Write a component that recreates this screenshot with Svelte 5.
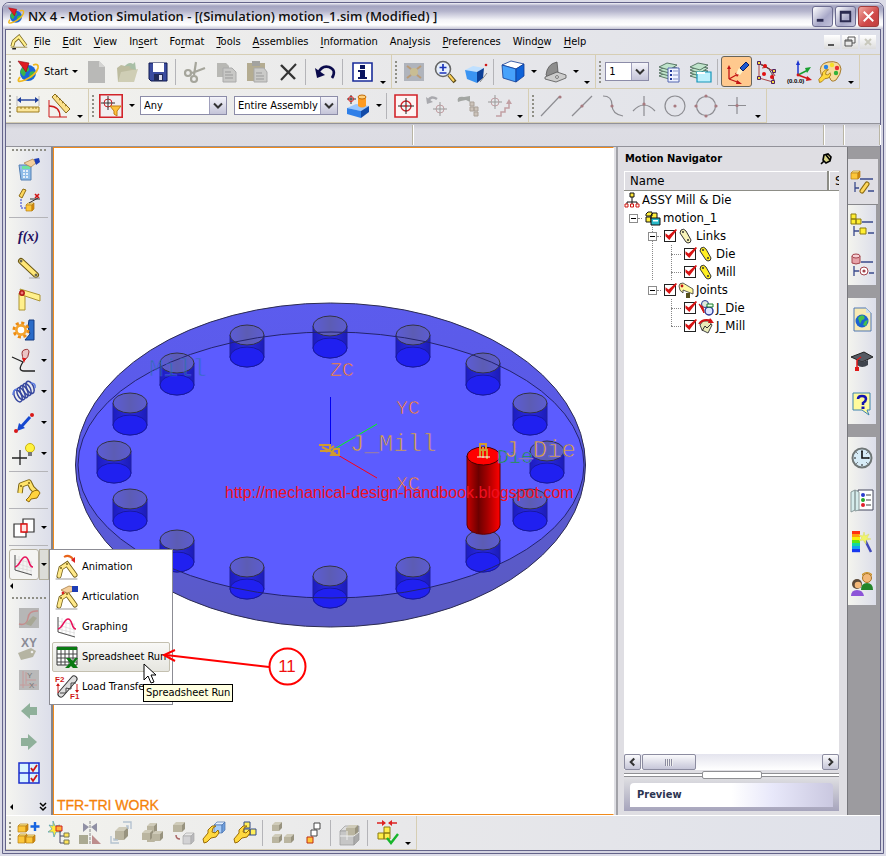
<script lang="ts">
	type Tool = {
		id?: string;
		label?: string;
		sep?: boolean;
		arrow?: boolean;
		active?: boolean;
		disabled?: boolean;
	};

	const sep: Tool = { sep: true };

	// small shaded box used by many icons
	function box(x: number, y: number, w: number, h: number, d: number, top: string, front: string, side: string, line = 'none') {
		return `<g stroke="${line}" stroke-width=".7" stroke-linejoin="round">
			<path fill="${top}" d="M${x} ${y + d}l${d} ${-d}h${w}l${-d} ${d}z"/>
			<path fill="${front}" d="M${x} ${y + d}h${w}v${h}h${-w}z"/>
			<path fill="${side}" d="M${x + w} ${y + d}l${d} ${-d}v${h}l${-d} ${d}z"/></g>`;
	}
	const yellowBox = (x: number, y: number, w: number, h: number, d = 2) => box(x, y, w, h, d, '#fff3a0', '#fcc63a', '#d8890c', '#b98013');
	const greyBox = (x: number, y: number, w: number, h: number, d = 3) => box(x, y, w, h, d, '#cfcbb9', '#bab5a0', '#98937f');
	const wrench = '<path d="M2 22l3-1 4-4 5-1 3-4-1-3-3 3-3-1 1-4 3-2-4 0-4 4 0 3-5 6z" fill="#ffd83e" stroke="#9a6c08"/>';
	const arm = (y = 0) => `<g transform="translate(0 ${y})" stroke-linecap="round" fill="none"><path d="M4 19L6 11L12 7L20 18" stroke="#6f5b14" stroke-width="5"/><path d="M4 19L6 11L12 7L20 18" stroke="#ffe98a" stroke-width="3.400"/><circle cx="12" cy="7" r="1" fill="#7c6516"/><circle cx="6" cy="11" r="1" fill="#7c6516"/><path d="M1 22h21" stroke="#999"/></g>`;
	const graph = '<path d="M3 2v15l17 5M7 3v15M11 4v15M15 6v14M19 8v13M3 6l17 4M3 10l17 5M3 14l17 4" stroke="#d4d4d4" fill="none" stroke-width=".6"/><path d="M3 2v15l17 5" stroke="#555" fill="none"/><path d="M3 14C8 13 9 4 13 4C18 4 16 14 21 14" stroke="#e8115b" stroke-width="1.600" fill="none"/>';
	const stack = [13, 10, 7, 4].map((y) => `<path d="M2 ${y + 3}l8-4 10 2-8 5z" fill="#bfe3cb" stroke="#3d5e4b" stroke-width=".8"/>`).join('');
	const target = (c: string) => `<circle cx="12" cy="12" r="5" fill="none" stroke="${c}" stroke-width="1.300"/><path d="M12 4v16M4 12h16" stroke="#222"/><circle cx="12" cy="12" r="1.300" fill="${c}"/>`;
	const greyTarget = (x: number, y: number) => `<circle cx="${x}" cy="${y}" r="4" fill="none" stroke="#c2a0a4"/><path d="M${x} ${y - 7}v14M${x - 7} ${y}h14" stroke="#999"/>`;
	const dot = (x: number, y: number, c = '#a87a80', r = 1.6) => `<circle cx="${x}" cy="${y}" r="${r}" fill="${c}"/>`;
	const globe = '<circle cx="12" cy="13" r="8" fill="#1a66d8"/><path d="M6 8q5-3 7 0q1 3-3 4q-1 5-3 4l-3-4zM14 12q5-2 5 1l-3 5-3-2z" fill="#3bb54a"/><path d="M4 17Q-1 24 9 20Q20 15 22 8Q23 3 17 5" fill="none" stroke="#f0b91e" stroke-width="1.800"/><path d="M2 1l11 2-3 9z" fill="#e01a22" stroke="#8a0a12" stroke-width=".6"/>';

	const icons: Record<string, string> = {
		nx: globe,
		part: '<path d="M3 18L5 11L12 5L21 17" stroke="#6f5b14" stroke-width="5" fill="none"/><path d="M3 18L5 11L12 5L21 17" stroke="#fff08c" stroke-width="3" fill="none"/><path d="M1 19h22" stroke="#8a7a2a"/><path d="M3 21h5" stroke="#222" stroke-width="2"/>',
		new: '<path d="M4 1h11l6 6v16H4z" fill="#b9b9b7"/><path d="M15 1v6h6" fill="#d4d4d2"/>',
		open: '<path d="M2 8l4-3 4 1 8-1 2 3-1 14H3z" fill="#bdbc9f"/><path d="M6 12l17-3-4 13H3z" fill="#cfceb5"/><path d="M9 7Q14 1 18 4l2-2 1 8-7-2 2-1q-3-2-7 0" fill="#a8bfa6"/>',
		save: '<path d="M3 3h18v18H5l-2-2z" fill="#3b4c9f" stroke="#101a50"/><path d="M7 3h11v9H7z" fill="#fff"/><path d="M8 14h9v7H8z" fill="#222b58"/><path d="M13 15h3v5h-3z" fill="#dde"/>',
		cut: '<g fill="none" stroke="#a5a59b" stroke-width="2.200"><path d="M13 2L11 15M22 8L9 13"/><circle cx="5" cy="13" r="3"/><circle cx="11" cy="19" r="3"/></g>',
		copy: '<path d="M3 3h9l3 3v11H3z" fill="#b8b8b4"/><path d="M9 8h9l4 4v10H9z" fill="#c8c8c6" stroke="#aaa"/><path d="M11 12h6M11 15h8M11 18h8" stroke="#999"/>',
		paste: '<path d="M2 3h18v18H2z" fill="#b4ac91"/><path d="M7 1h8v5H7z" fill="#a3a3a0"/><path d="M9 8h10l3 4v10H9z" fill="#cacac8" stroke="#a9a9a9"/><path d="M11 13h6M11 16h8M11 19h8" stroke="#999"/>',
		delete: '<path d="M5 5l14 14" stroke="#333" stroke-width="2.400"/><path d="M20 4L5 20" stroke="#333" stroke-width="2"/>',
		undo: '<path d="M5 13Q9 5 16 7Q24 10 19 18" stroke="#0b0b4c" stroke-width="2.600" fill="none"/><path d="M2 8l2 10 8-3z" fill="#0b0b4c"/>',
		info: '<path d="M3 3h19v18H3z" fill="#fff" stroke="#1a2c9a" stroke-width="1.600"/><path d="M10 5h5v4h-5zM8 10h7v7h2v2H8v-2h2v-5H8z" fill="#0c1660"/>',
		fit: '<path d="M2 3h20v18H2z" fill="#b0b4bc"/><circle cx="12" cy="12" r="4" fill="#c9bd93"/><path d="M5 6l4 3M19 6l-4 3M5 18l4-3M19 18l-4-3" stroke="#bb9b75" stroke-width="2"/>',
		zoom: '<path d="M16 15l6 7" stroke="#5a4a18" stroke-width="4"/><path d="M16 15l5 6" stroke="#ffd45c" stroke-width="2"/><circle cx="10" cy="9" r="7.500" fill="#e6effc" stroke="#666" stroke-width="1.600"/><path d="M10 4v7M6.500 7.500h7M6.500 13h7" stroke="#1c35b8" stroke-width="1.700"/>',
		bluebox: '<path d="M1 10l8-4 11 2-7 4z" fill="#bfe0ff"/><path d="M1 10l12 2v11L3 19z" fill="#3a94f2"/><path d="M13 12l7-4-1 10-6 5z" fill="#0c3f96"/><path d="M16 22l7-9" stroke="#888"/>' + dot(22, 5, '#d01818', 1.3),
		cube: '<g stroke="#123c96" stroke-width=".8"><path d="M1 5l9-4 13 3-8 5z" fill="#fff"/><path d="M1 5l14 4v13L2 18z" fill="#47a2fb"/><path d="M15 9l8-5v12l-8 6z" fill="#0f63d8"/></g>',
		shaded: '<g stroke="#555" stroke-width=".8"><path d="M3 15Q4 4 14 2l1 10-9 6z" fill="#8d8d8d"/><path d="M2 17l12-5 9 3v3l-10 4-11-3z" fill="#ccc"/><circle cx="14" cy="17" r="1.400" fill="#fff"/></g>',
		layers1: stack + '<path d="M11 8h11v14H11z" fill="#eef2ff" stroke="#5566b0"/><path d="M13 11h2M13 15h2M13 19h2" stroke="#22399b" stroke-width="2"/><path d="M16 11h5M16 15h5M16 19h5" stroke="#8895c8"/>',
		layers2: stack + '<path d="M9 12h14v10H9z" fill="#bdf1fd" stroke="#1695b8" stroke-width="1.200"/><path d="M9 12h8v2H9z" fill="#fff"/>',
		csys: '<path d="M4 19V8M4 19l11 4M4 19l9-5" stroke="#c21414" fill="none" stroke-width="1.300"/><path d="M2 9l2-4 2 4zM12 20l5 4-6 0zM10 13l6-1-4 5z" fill="#c21414"/><path d="M11 14l3-6 4 3-3 4z" fill="#fff3c8"/><path d="M15 8l6-6 3 3-6 6z" fill="#1d57d0" stroke="#0d1c62"/>',
		spline: '<path d="M3 3v15l14 4V11zM3 3l14 8M6 8q8-3 13 8" stroke="#a44" fill="none"/><path d="M5 5q9 0 13 15" stroke="#444" fill="none"/>' + [[3, 3], [3, 18], [18, 11], [17, 22]].map(([x, y]) => `<path d="M${x - 1.5} ${y - 1.5}h3v3h-3z" fill="#f6d83c" stroke="#502060"/>`).join('') + dot(9, 6, '#e01010', 2) + dot(8, 14, '#e01010', 2) + dot(16, 17, '#e01010', 2),
		wcs: '<path d="M11 15V4" stroke="#1c34d0" stroke-width="1.500"/><path d="M9 5l2-5 2 5z" fill="#1c34d0"/><path d="M11 15l10-5" stroke="#18a030" stroke-width="1.500"/><path d="M18 8l6-1-4 6z" fill="#18a030"/><path d="M11 15l11 4" stroke="#d01818" stroke-width="1.500"/><path d="M20 16l5 4-6 1z" fill="#d01818"/>' + dot(11, 15, '#d01818', 1.4) + '<text x="0" y="23" font-family="Liberation Sans" font-size="6" font-weight="bold">(0.0.0)</text>',
		palette: '<path d="M3 14Q0 4 10 2Q22 0 23 9Q23 14 18 20Q13 23 12 18Q10 15 8 18Q4 18 3 14z" fill="#f8dc9c" stroke="#a57a2c"/>' + dot(8, 7, '#2a83e8', 2.2) + dot(14, 5, '#f4e02a', 2.2) + dot(19, 8, '#e83030', 2.2) + dot(18, 13, '#34b13a', 2.2) + '<g transform="translate(0 6) scale(.75)">' + wrench + '</g>',
		ruler: '<path d="M1 2v10M23 2v10" stroke="#bbb"/><path d="M3 6h18" stroke="#20409c" stroke-width="1.400"/><path d="M1 6l4-3v6zM23 6l-4-3v6z" fill="#20409c"/><path d="M1 13h22v5H1z" fill="#fbe69a" stroke="#9d7c1c"/><path d="M5 13v2M9 13v2M13 13v2M17 13v2M20 13v2" stroke="#9d7c1c"/>',
		protractor: '<path d="M2 6v17h18" stroke="#cc1b1b" fill="none"/><path d="M2 12Q13 12 13 23" stroke="#cc1b1b" fill="none" stroke-width="1.300"/><path d="M5 3l3-3 15 15-4 4z" fill="#fbe089" stroke="#866a1c"/><path d="M9 3l2-1M12 6l2-1M15 9l2-1M18 12l2-1" stroke="#866a1c"/>',
		filter: '<path d="M.8.8h22.400v22.400H.8z" fill="#f2eef0" stroke="#d2232a" stroke-width="1.600"/><circle cx="9" cy="9" r="4" fill="none" stroke="#d2232a"/><path d="M9 2v14M2 9h14" stroke="#333"/><path d="M11 12h11l-4 5v5l-3-2v-3z" fill="#ffc23a" stroke="#c07d12"/>',
		solid: '<path d="M1 14l9-4 13 2-8 5z" fill="#9ac8ff"/><path d="M1 14l14 3v7L1 20z" fill="#2f7fe8"/><path d="M15 17l8-5v6l-8 6z" fill="#134ba8"/><path d="M12 3v9q4 3 8 0V3z" fill="#ff9b20"/><ellipse cx="16" cy="3" rx="4" ry="2" fill="#ffd07a" stroke="#c06a08"/><path d="M5 1v9M1 5h9" stroke="#333"/><circle cx="5" cy="5" r="2.500" fill="none" stroke="#d22"/>',
		snap: '<path d="M1 1h22v22H1z" fill="#fdf4f4" stroke="#d2232a" stroke-width="1.600"/>' + target('#d2232a'),
		snapUndo: '<path d="M3 7Q6 1 12 5" stroke="#a9a9ae" stroke-width="2.500" fill="none"/><path d="M1 3l1 7 6-2z" fill="#a9a9ae"/>' + greyTarget(15, 15),
		snapList: '<path d="M2 8Q0 2 8 3l6-1v6l-4-2-5 1z" fill="#a3a6a3"/><path d="M14 8h4v4h-4zM14 13h4v4h-4zM18 18h4v4h-4zM18 13h4v4h-4z" fill="#ccc3ba" stroke="#aaa198"/>',
		snapPath: greyTarget(8, 8) + '<path d="M9 22h5v-4h4v-4h4V8" stroke="#c2a0a4" stroke-width="1.500" fill="none"/><path d="M19 10l3-5 3 5z" fill="#c2a0a4"/>',
		line1: '<path d="M2 22L20 3" stroke="#8d8d92" stroke-width="1.200"/>' + dot(21, 3),
		line2: '<path d="M2 22L22 2" stroke="#8d8d92" stroke-width="1.200"/>' + dot(12, 12),
		curve: '<path d="M2 2q9 0 9 9t11 11" stroke="#8d8d92" stroke-width="1.200" fill="none"/>' + dot(11, 12),
		intersect: '<path d="M1 17q11-12 22 0M12 2v20" stroke="#8d8d92" stroke-width="1.200" fill="none"/>' + dot(12, 10),
		center: '<circle cx="12" cy="12" r="10" stroke="#8d8d92" stroke-width="1.200" fill="none"/>' + dot(12, 12),
		quadrant: '<circle cx="12" cy="12" r="9.500" stroke="#8d8d92" stroke-width="1.200" fill="none"/>' + dot(12, 2) + dot(12, 22) + dot(2, 12) + dot(22, 12),
		point: '<path d="M12 3v17M3 11.500h18" stroke="#8d8d92" stroke-width="1.200"/>' + dot(12, 11.5),
		calc: '<path d="M2 8l12 0 0 15H4z" fill="#8ebce8" stroke="#5480b4"/><path d="M5 9h8v3H5z" fill="#6ee2a0"/><path d="M6 14h2M9 14h2M6 17h2M9 17h2M6 20h2M9 20h2" stroke="#fff" stroke-width="1.500"/><path d="M7 6l9-4 3 4-5 4-4-2z" fill="#f4cf9c" stroke="#a87c44" stroke-width=".7"/><path d="M17 2l5-1 1 4-4 3z" fill="#1d3cb4"/>',
		solver: '<path d="M2 8l4-7 3 1-4 8z" fill="#fcd65c" stroke="#8e6c14"/><path d="M4 11v9h5" stroke="#2a3bd0" stroke-dasharray="2 1" fill="none"/>' + yellowBox(9, 15, 6, 6, 2) + '<path d="M12 15l9-5M13 11h10" stroke="#333"/><path d="M18 6l4 4M22 6l-4 4" stroke="#d01414" stroke-width="1.600"/>',
		link: '<path d="M4 5l15 14" stroke="#6b5712" stroke-width="6" stroke-linecap="round"/><path d="M4 5l15 14" stroke="#ffe777" stroke-width="4" stroke-linecap="round"/>' + dot(4, 5, '#665', 1.5) + dot(19, 19, '#665', 1.5) + '<path d="M12 22h11" stroke="#aaa"/>',
		joint: '<path d="M2 6h6v17H2z" fill="#fff08c" stroke="#ad9431"/><path d="M3 2l20 6v6L5 8z" fill="#fff08c" stroke="#ad9431"/><circle cx="5" cy="6" r="2.200" fill="#e77" stroke="#b01515" stroke-width="1.500"/>',
		gear: '<path d="M17 2l5 0v20l-9 0 5-6-2-7z" fill="#2a6bc8" stroke="#143a80"/><circle cx="9" cy="12" r="7" fill="none" stroke="#ed8c12" stroke-width="3" stroke-dasharray="3 2.500"/><circle cx="9" cy="12" r="4.600" fill="#fff" stroke="#f5a42e" stroke-width="2.600"/>',
		cam: '<path d="M0 8l11 5Q5 22 12 22H23" stroke="#222" stroke-width="1.300" fill="none"/><path d="M12 12Q8 2 12 1Q17-1 17 3Q17 8 12 12z" fill="#ecc4c4" stroke="#933"/><path d="M10 9h4l-2 5z" fill="#e01818"/>',
		spring: '<g fill="none" stroke-width="1.500"><g stroke="#35459e">' + [6, 9, 12, 15, 18].map((x) => `<ellipse cx="${x}" cy="${20 - x * 0.7}" rx="3.500" ry="6.500" transform="rotate(-25 ${x} ${20 - x * 0.7})"/>`).join('') + '</g><path d="M1 15q0-5 4-6M19 3q5 0 4 5" stroke="#5b7be0"/></g>',
		force: '<path d="M18 6L9 16" stroke="#1648d0" stroke-width="3"/><path d="M5 20l2-8 6 5z" fill="#1648d0"/>' + dot(20, 4, '#d81818', 2) + dot(4, 20, '#d81818', 2),
		marker: '<path d="M8 8v15M0 16h15" stroke="#222" stroke-width="1.300"/><circle cx="18" cy="6" r="4.500" fill="#fff23e" stroke="#c9b20e"/><path d="M16 10h4v4h-4z" fill="#777"/>',
		robot: '<path d="M3 14L4 6L12 3L15 9L20 14" stroke="#7c6412" stroke-width="5.500" fill="none" stroke-linejoin="round"/><path d="M3 14L4 6L12 3L15 9L20 14" stroke="#ffe36a" stroke-width="3.500" fill="none" stroke-linejoin="round"/><path d="M15 13q6-4 8 1l-3 5-6 1-2 3-3-2 3-3z" fill="#ffd23c" stroke="#8f6a0c"/>' + dot(4, 7, '#7c6412', 1) + dot(12, 4, '#7c6412', 1),
		interfere: '<path d="M11 3h11v13H11zM2 8h12v13H2z" fill="#fff" stroke="#333" stroke-width="1.200"/><path d="M9 8h6v8H9z" fill="#fde4e4" stroke="#e01010" stroke-width="1.400"/>',
		graph,
		plot: '<path d="M2 2h20v20H2z" fill="#b6b6b6"/><path d="M2 18q8 2 9-6t10-7" stroke="#c58c8c" stroke-width="1.500" fill="none"/><path d="M8 18l8-8 4 2-6 8z" fill="#a7a795"/>',
		tag: '<text x="4" y="10" font-family="Liberation Sans" font-size="12" font-weight="bold" fill="#8b8b96">XY</text><path d="M1 16l13-5 5 3-3 6-12 3z" fill="#b5b4a2"/>' + dot(15, 15, '#eee', 1.3),
		plotXY: '<path d="M2 2h20v20H2z" fill="#b9b9b9"/><path d="M6 3v17M3 17h17M9 12h10M9 4v12" stroke="#c79a9a"/><text x="10" y="10" font-size="8" font-family="Liberation Sans" fill="#777">Y</text><text x="12" y="20" font-size="8" font-family="Liberation Sans" fill="#777">X</text>',
		prev: '<path d="M4 12l9-8v4h7v8h-7v4z" fill="#8fb09a"/>',
		next: '<path d="M20 12l-9-8v4H4v8h7v4z" fill="#8fb09a"/>',
		layout: '<path d="M2 2h20v20H2z" fill="#d8f4ff" stroke="#1a2ccc" stroke-width="1.500"/><path d="M12 2v20M2 12h20" stroke="#1a2ccc" stroke-width="1.500"/><path d="M14 7l2 3 4-6M14 17l2 3 4-6" stroke="#d01414" stroke-width="1.800" fill="none"/>',
		animation: arm(2) + '<path d="M9 2q5-3 9 2" stroke="#e8641a" stroke-width="2" fill="none"/><path d="M16 5l4-3 0 6z" fill="#d22"/>',
		articulation: arm(2) + '<path d="M6 5l8-4 4 1 1 4-7 2z" fill="#f4cf9c" stroke="#a87c44" stroke-width=".8"/><path d="M17 1h6v6h-6z" fill="#1d3cb4"/>' + dot(8, 8, '#d22', 1.4),
		sheet: '<path d="M2 2h20v18H2z" fill="#fff" stroke="#333"/><path d="M2 2h20v3H2z" fill="#0a7a12"/><path d="M2 9h20M2 13h20M2 17h20M6 5v15M10 5v15M14 5v15M18 5v15" stroke="#444"/><path d="M11 13h4l3 3 2-3h3l-4 5 4 5h-5l-2-2-2 2h-4l5-5z" fill="#0a7a12"/>',
		load: '<path d="M6 19L19 4" stroke="#333" stroke-width="7" stroke-linecap="round"/><path d="M6 19L19 4" stroke="#ddd" stroke-width="5" stroke-linecap="round"/><path d="M5 18l6 0 0-5 5 1 0-6 5 0" stroke="#444" fill="none"/><text x="0" y="7" font-size="8" font-weight="bold" fill="#d01818" font-family="Liberation Sans">F2</text><text x="15" y="24" font-size="8" font-weight="bold" fill="#d01818" font-family="Liberation Sans">F1</text><path d="M3 18V9M22 9v8" stroke="#d01818"/><path d="M1 11l2-3 2 3zM20 15l2 3 2-3z" fill="#d01818"/>',
		addComp: yellowBox(2, 3, 8, 6) + yellowBox(2, 13, 7, 7) + yellowBox(10, 14, 7, 6) + '<path d="M19 1v9M14.500 5.500h9" stroke="#1664e0" stroke-width="2.400"/>',
		newComp: '<path d="M6 0l2 5 5-1-3 4 4 3-5 0-2 5-1-5-5 0 4-3-3-4 4 1z" fill="#ffe93c" stroke="#4a9bb5" stroke-width=".7"/><path d="M9 5h6v5H9z" fill="#ffb03a" stroke="#d02222"/><path d="M13 10v12h4M13 15h4" stroke="#446" fill="none"/><path d="M17 12h5v4h-5zM17 19h5v4h-5z" fill="#ffe45a" stroke="#775"/>',
		mirror: '<path d="M12 0v24" stroke="#888" stroke-dasharray="3 1"/><path d="M5 2l6 4-6 5zM19 2l-6 4 6 5z" fill="#9090a4"/><path d="M1 14h9v9H1z" fill="#aaa992"/><path d="M14 14l9 9h-9z" fill="#bd8d8d"/>',
		move: greyBox(6, 6, 9, 9, 4) + '<path d="M14 1h8v7M17 5h2v3M2 15v7h8M5 17v2h4" stroke="#b4c2d0" stroke-width="1.400" fill="none"/>',
		assemble: greyBox(7, 2, 7, 16, 3) + greyBox(2, 9, 8, 7, 3) + greyBox(12, 10, 8, 7, 3),
		replace: greyBox(2, 1, 9, 7) + box(12, 12, 8, 8, 3, '#e8e8e8', '#d2d2d4', '#b8b8bc', '#aaa') + '<path d="M5 14q0 4 4 4" stroke="#a66" stroke-width="1.500" fill="none"/>',
		wrenchCube: box(12, 1, 8, 8, 3, '#e2f0ff', '#a6ccf8', '#6f9fdc', '#4a72b0') + wrench,
		wrenchComp: '<g fill="#ffee5a" stroke="#334a88"><path d="M11 1h6v6h-6zM11 8h6v6h-6zM17 8h6v6h-6z"/></g>' + wrench,
		explode: greyBox(2, 1, 7, 6) + greyBox(2, 13, 7, 6) + greyBox(14, 13, 7, 6),
		sequence: '<g fill="#fff" stroke="#444"><path d="M13 2h6v6h-6zM10 9h6v6h-6z"/><path d="M6 16h6v6H6z" fill="#ffc53c" stroke="#c02c12"/></g>',
		cluster: box(2, 5, 14, 14, 5, '#ddd', '#c6c6c6', '#aaa', '#999') + greyBox(8, 4, 9, 8, 3) + '<path d="M2 15h14l5-4M9 10v9" stroke="#eee" fill="none"/>',
		check: '<path d="M2 2h8M22 2h-8" stroke="#d22" stroke-width="1.500"/><path d="M7-1l4 3-4 3zM17-1l-4 3 4 3z" fill="#d22"/><g fill="#ffee4a" stroke="#8a7a10"><path d="M9 6h6v6H9zM3 12h6v6H3zM9 12h6v6H9z"/></g><path d="M12 17l4 5 7-9" stroke="#17b52c" stroke-width="2.400" fill="none"/>',
		tabMotion: yellowBox(1, 1, 7, 6) + '<path d="M10 9h13M5 12v10M5 18h4M18 21h6" stroke="#3a4a8c" stroke-width="1.300" fill="none"/><path d="M12 21l5-7" stroke="#8b6a10" stroke-width="5" stroke-linecap="round"/><path d="M12 21l5-7" stroke="#ffd75a" stroke-width="3" stroke-linecap="round"/>',
		tabAssy: '<g fill="#ffee32" stroke="#8b7a10"><path d="M1 1h5v5H1zM1 6h5v5H1zM6 6h5v5H6zM10 15h6v6h-6z"/></g><path d="M12 9h11M4 13v10M4 18h5M18 20h6" stroke="#3a4a8c" stroke-width="1.300" fill="none"/>',
		tabPart: '<path d="M2 3v7q4 2 8 0V3" fill="#e6a2a8" stroke="#a3444c"/><ellipse cx="6" cy="3" rx="4" ry="2" fill="#f6d0d4" stroke="#a3444c"/><path d="M11 9h12M4 13v10M4 18h5M19 20h5" stroke="#3a4a8c" stroke-width="1.300" fill="none"/><circle cx="14" cy="18" r="4" fill="#fff" stroke="#a3444c"/>' + dot(14, 18, '#a3444c'),
		web: '<path d="M4 1h12l5 5v18H4z" fill="#f8eab4" stroke="#5079b4"/><path d="M16 1v5h5z" fill="#cde"/><circle cx="12" cy="14" r="6.500" fill="#1b62d2"/><path d="M8 11q3-4 6-2 2 3-2 4l-2 4zM15 14l3-1-2 6-3-1z" fill="#46c04e"/>',
		training: '<path d="M1 8l13-5 9 5-11 5z" fill="#555a63" stroke="#222"/><path d="M7 11v5q5 4 11 0v-5l-6 2z" fill="#3f434c"/><path d="M11 8L7 11v8" stroke="#e01818" stroke-width="1.500" fill="none"/><path d="M5 18h4v4H5z" fill="#e01818"/>',
		help: '<path d="M3 2h17v17h-3l2 5-7-5H3z" fill="#fffa9c" stroke="#3c83ac"/><path d="M8 8q0-3 4-3t4 3q0 2-3 4v2" stroke="#1414b0" stroke-width="2.500" fill="none"/><path d="M11.500 15.500h3v2.500h-3z" fill="#1414b0"/>',
		clock: '<circle cx="12" cy="12" r="9.500" fill="#d7ecf7" stroke="#6f7676" stroke-width="2"/><path d="M12 4v2M12 18v2M4 12h2M18 12h2M6.500 6.500l1 1M17.500 6.500l-1 1M6.500 17.500l1-1M17.500 17.500l-1-1" stroke="#222"/><path d="M12 5v7h7" stroke="#111" stroke-width="1.600" fill="none"/>',
		book: '<path d="M8 2h15v20H8z" fill="#fff" stroke="#44475c"/><path d="M1 4l4-2v20l-4 2zM5 2l4 2v18l-4 1z" fill="#d6ecec" stroke="#8a9a9a"/><path d="M16 7h5M16 12h5M16 17h5" stroke="#444"/>' + dot(13, 7, '#2a3ccc', 2) + dot(13, 12, '#28a82c', 2) + dot(13, 17, '#e0202c', 2),
		spectrum: ['#ff3010', '#ff9c10', '#f6f00c', '#5ce414', '#10d8a0', '#10a0f4', '#1838f0'].map((c, i) => `<path d="M2 ${1 + i * 3}h8v3.200H2z" fill="${c}"/>`).join('') + '<path d="M15 10l6 12" stroke="#4048b8" stroke-width="2.500"/><path d="M14 2l1 4 4-2-2 4 4 1-5 1 0 4-3-4-4 1 3-3-3-3 4 1z" fill="#f0f46a" stroke="#d8dc60" stroke-width=".5"/>',
		roles: '<circle cx="17" cy="6" r="4.500" fill="#f3b878" stroke="#a87422"/><path d="M12 4q5-6 10 0l0-2q-5-4-10 0z" fill="#cc8f22"/><path d="M11 18q0-7 6-7t6 7z" fill="#23852a"/><circle cx="7" cy="12" r="5" fill="#5c4a38"/><circle cx="8" cy="13" r="3.300" fill="#f3b878"/><path d="M1 24q0-6 6-6t7 6z" fill="#8d54d8"/>',
		assyNode: '<path d="M8 4v6M3 14v-4h10v4M8 10v4" stroke="#111" fill="none"/><path d="M6 1h4v4H6z" fill="#ffe83a" stroke="#111"/><g fill="#ffe" stroke="#d01414"><path d="M1 12h3v3H1zM6.500 12h3v3h-3zM12 12h3v3h-3z"/></g>',
		simNode: '<g fill="#ffef3c" stroke="#111"><path d="M1 4l2-2h4v4H1zM1 7h5v5H1zM6 5l2-2h4v6H6z"/></g><path d="M6 8h9v7H6z" fill="#28b8c8" stroke="#111"/><path d="M8 10h5v1.500H8z" fill="#fff"/>',
		linkNode: '<path d="M3 2q3-2 5 1l5 9q0 3-3 3l-2-1-6-9z" fill="#f7f2b8" stroke="#333"/>' + dot(5, 4, '#333', 1) + dot(10, 12, '#333', 1),
		linkOn: '<path d="M3 2q3-2 5 1l5 9q0 3-3 3l-2-1-6-9z" fill="#ffee21" stroke="#333"/>' + dot(5, 4, '#333', 1) + dot(10, 12, '#333', 1),
		jointNode: '<path d="M1 4q0-3 4-3l10 6v5L5 8v3Q1 9 1 4z" fill="#fff9a0" stroke="#333" stroke-width=".8"/><path d="M8 11h4v5H8z" fill="#55501c"/>' + dot(4, 4, '#c01414', 1.4),
		jDie: '<circle cx="7" cy="4" r="3.500" fill="#dde8dd" stroke="#2a3590"/><circle cx="11" cy="11" r="4" fill="#dfe6ff" stroke="#2a3590" stroke-width="1.400"/><path d="M9 4h6v3H9z" fill="#e8ffe8" stroke="#197a2a"/><path d="M1 4l5 9-1-6z" fill="#d01414" stroke="#d01414"/>',
		jMill: '<path d="M5 3h6l3 4-4 8-6-3-2-5z" fill="#e9ecb8" stroke="#444"/><path d="M1 6q4-6 13-3" stroke="#d01414" stroke-width="2" fill="none"/><path d="M12 0l4 5-6 0z" fill="#d01414"/><path d="M4 13l3-5 2 2 4-4" stroke="#333" fill="none"/>',
	};

	const menus = ['&File', '&Edit', '&View', 'In&sert', 'Fo&rmat', '&Tools', '&Assemblies', '&Information', 'Ana&lysis', '&Preferences', 'Wind&ow', '&Help'];

	const standard: Tool[] = [
		{ id: 'new', label: 'New', disabled: true },
		{ id: 'open', label: 'Open', disabled: true },
		{ id: 'save', label: 'Save' },
		sep,
		{ id: 'cut', label: 'Cut', disabled: true },
		{ id: 'copy', label: 'Copy', disabled: true },
		{ id: 'paste', label: 'Paste', disabled: true },
		{ id: 'delete', label: 'Delete' },
		sep,
		{ id: 'undo', label: 'Undo' },
		sep,
		{ id: 'info', label: 'Information' },
	];
	const view: Tool[] = [
		{ id: 'fit', label: 'Fit', disabled: true },
		{ id: 'zoom', label: 'Zoom' },
		{ id: 'bluebox', label: 'Perspective' },
		sep,
		{ id: 'cube', label: 'Orient View', arrow: true },
		{ id: 'shaded', label: 'Shaded', arrow: true },
	];
	const utility: Tool[] = [
		{ id: 'layers1', label: 'Layer Settings' },
		{ id: 'layers2', label: 'Layer Visible in View' },
		sep,
		{ id: 'csys', label: 'Display WCS', active: true },
		{ id: 'spline', label: 'WCS Dynamics' },
		{ id: 'wcs', label: 'WCS Origin' },
		{ id: 'palette', label: 'Edit Object Display' },
	];
	const measure: Tool[] = [
		{ id: 'ruler', label: 'Measure Distance' },
		{ id: 'protractor', label: 'Measure Angle' },
	];
	const snap: Tool[] = [
		{ id: 'solid', label: 'Selection Intent', arrow: true },
		sep,
		{ id: 'snap', label: 'Snap Point' },
		{ id: 'snapUndo', label: 'Clear', disabled: true },
		{ id: 'snapList', label: 'Find', disabled: true },
		{ id: 'snapPath', label: 'Trace', disabled: true },
	];
	const points: Tool[] = [
		{ id: 'line1', label: 'End Point', disabled: true },
		{ id: 'line2', label: 'Mid Point', disabled: true },
		{ id: 'curve', label: 'Control Point', disabled: true },
		{ id: 'intersect', label: 'Intersection', disabled: true },
		{ id: 'center', label: 'Arc Center', disabled: true },
		{ id: 'quadrant', label: 'Quadrant Point', disabled: true },
		{ id: 'point', label: 'Existing Point', disabled: true },
	];
	const motion: Tool[] = [
		{ id: 'calc', label: 'Environment' },
		{ id: 'solver', label: 'Solver' },
		sep,
		{ id: 'fx', label: 'Function Manager' },
		{ id: 'link', label: 'Link' },
		{ id: 'joint', label: 'Joint' },
		{ id: 'gear', label: 'Gear', arrow: true },
		{ id: 'cam', label: 'Curve Contact', arrow: true },
		{ id: 'spring', label: 'Spring', arrow: true },
		{ id: 'force', label: 'Force', arrow: true },
		{ id: 'marker', label: 'Smart Point', arrow: true },
		sep,
		{ id: 'robot', label: 'Master Model Dimension' },
		sep,
		{ id: 'interfere', label: 'Interference', arrow: true },
		sep,
	];
	const plotting: Tool[] = [
		{ id: 'plot', label: 'Edit Plot', disabled: true },
		{ id: 'tag', label: 'Data Tag', disabled: true },
		{ id: 'plotXY', label: 'Plot Axes', disabled: true },
		{ id: 'prev', label: 'Previous', disabled: true },
		{ id: 'next', label: 'Next', disabled: true },
		{ id: 'layout', label: 'Layout' },
	];
	const assembly: Tool[] = [
		{ id: 'addComp', label: 'Add Component' },
		{ id: 'newComp', label: 'Create Component' },
		{ id: 'mirror', label: 'Mirror Assembly', disabled: true },
		{ id: 'move', label: 'Reposition', disabled: true },
		{ id: 'assemble', label: 'Mate', disabled: true },
		{ id: 'replace', label: 'Replace', disabled: true },
		{ id: 'wrenchCube', label: 'Work Part' },
		{ id: 'wrenchComp', label: 'Edit Component' },
		sep,
		{ id: 'explode', label: 'Exploded Views', disabled: true },
		{ id: 'sequence', label: 'Sequence' },
		sep,
		{ id: 'cluster', label: 'Arrangements', disabled: true },
		sep,
		{ id: 'check', label: 'Check Clearances' },
	];

	const popup = [
		{ id: 'animation', label: 'Animation' },
		{ id: 'articulation', label: 'Articulation' },
		{ id: 'graph', label: 'Graphing' },
		{ id: 'sheet', label: 'Spreadsheet Run' },
		{ id: 'load', label: 'Load Transfer' },
	];

	const tabs = [
		['tabMotion', 'tabAssy', 'tabPart'],
		['web', 'training', 'help'],
		['clock', 'book', 'spectrum', 'roles'],
	];

	let tree = $state([
		{ label: 'ASSY Mill & Die', icon: 'assyNode', level: 0 },
		{ label: 'motion_1', icon: 'simNode', level: 1, open: true },
		{ label: 'Links', icon: 'linkNode', level: 2, open: true, checked: true, rail: true },
		{ label: 'Die', icon: 'linkOn', level: 3, checked: true, rail: true },
		{ label: 'Mill', icon: 'linkOn', level: 3, checked: true, rail: true },
		{ label: 'Joints', icon: 'jointNode', level: 2, open: true, checked: true },
		{ label: 'J_Die', icon: 'jDie', level: 3, checked: true },
		{ label: 'J_Mill', icon: 'jMill', level: 3, checked: true },
	]);

	let layer = $state('1');
	let filter = $state('Any');
	let scope = $state('Entire Assembly');
	let hovered = $state('sheet');

	const holes = [
		[330, 326], [413, 335], [247, 335], [483, 363], [177, 363], [530, 403], [130, 403], [547, 451],
		[114, 451], [530, 499], [130, 499], [483, 540], [177, 540], [413, 567], [247, 567], [330, 576],
	];

	function split(label: string) {
		const i = label.indexOf('&');
		return [label.slice(0, i), label[i + 1], label.slice(i + 2)];
	}
</script>

{#snippet icon(id: string, size = 24)}
	<svg class="icon" width={size} height={size} viewBox={id.endsWith('Node') || ['linkOn', 'jDie', 'jMill'].includes(id) ? '0 0 16 16' : '0 0 24 24'} aria-hidden="true">
		{@html icons[id]}
	</svg>
{/snippet}

{#snippet tool(t: Tool)}
	{#if t.sep}
		<span class="sep"></span>
	{:else}
		<span class="slot">
			<button class="tool" class:tool--active={t.active} disabled={t.disabled} aria-label={t.label}>
				{#if t.id === 'fx'}
					<span class="fx">f(x)</span>
				{:else}
					{@render icon(t.id ?? '')}
				{/if}
			</button>
			{#if t.arrow}
				<button class="drop" aria-label="{t.label} options"></button>
			{/if}
		</span>
	{/if}
{/snippet}

{#snippet tools(list: Tool[])}
	{#each list as t}
		{@render tool(t)}
	{/each}
	<button class="drop drop--more" aria-label="Toolbar options"></button>
{/snippet}

{#snippet chevron()}
	<svg class="combo__arrow" viewBox="0 0 16 16" aria-hidden="true"><path d="M4 6l4 4 4-4" /></svg>
{/snippet}

<div class="window">
	<header class="title">
		{@render icon('nx', 18)}
		<h1>NX 4 - Motion Simulation - [(Simulation) motion_1.sim (Modified) ]</h1>
		<button class="caption" aria-label="Minimize"><svg viewBox="0 0 20 20"><path d="M4 14h7" stroke-width="3" /></svg></button>
		<button class="caption" aria-label="Maximize"><svg viewBox="0 0 20 20"><path d="M5 5h10v10H5zM5 6h10" stroke-width="2" /></svg></button>
		<button class="caption caption--close" aria-label="Close"><svg viewBox="0 0 20 20"><path d="M5 5l10 10M15 5L5 15" stroke-width="2" /></svg></button>
	</header>

	<div class="client">
		<nav class="menubar">
			{@render icon('part', 18)}
			{#each menus as m}
				{@const [a, key, b] = split(m)}
				<button class="menu">{a}<u>{key}</u>{b}</button>
			{/each}
			<div class="mdi">
				<button aria-label="Minimize document"><svg viewBox="0 0 16 14"><path d="M4 10h6" stroke-width="2" /></svg></button>
				<button aria-label="Restore document"><svg viewBox="0 0 16 14"><path d="M6 5V2h7v6h-3M3 5h7v6H3zM3 6h7" /></svg></button>
				<button aria-label="Close document" disabled><svg viewBox="0 0 16 14"><path d="M5 4l6 6M11 4l-6 6" stroke-width="2" /></svg></button>
			</div>
		</nav>

		<div class="bar">
			<div class="group">
				<span class="grip"></span>
				<button class="start">{@render icon('nx')}<span>Start</span><i class="tri"></i></button>
				{@render tools(standard)}
			</div>
			<div class="group">
				<span class="grip"></span>
				{@render tools(view)}
			</div>
			<div class="group">
				<span class="grip"></span>
				<label class="combo combo--layer">
					<select bind:value={layer} aria-label="Work layer"><option>1</option><option>2</option></select>
					{@render chevron()}
				</label>
				{@render tools(utility)}
			</div>
		</div>

		<div class="bar">
			<div class="group">
				<span class="grip"></span>
				{@render tools(measure)}
			</div>
			<div class="group">
				<span class="grip"></span>
				{@render tool({ id: 'filter', label: 'Selection filter', arrow: true })}
				<label class="combo combo--any">
					<select bind:value={filter} aria-label="Type filter"><option>Any</option><option>Body</option></select>
					{@render chevron()}
				</label>
				<label class="combo combo--scope">
					<select bind:value={scope} aria-label="Selection scope"><option>Entire Assembly</option><option>Work Part</option></select>
					{@render chevron()}
				</label>
				{@render tools(snap)}
			</div>
			<div class="group">
				<span class="grip"></span>
				{@render tools(points)}
			</div>
		</div>

		<div class="prompt">
			<span class="prompt__cue"></span>
			<span class="prompt__status"></span>
			<span class="prompt__box"></span>
			<span class="prompt__end"></span>
		</div>

		<main class="workspace">
			<aside class="side">
				<span class="grip grip--h"></span>
				{#each motion as t}
					{@render tool(t)}
				{/each}
				<div class="slot slot--open">
					<button class="tool" aria-label="Graphing">{@render icon('graph')}</button>
					<button class="drop" aria-label="Graphing options"></button>
					<ul class="popup">
						{#each popup as p}
							<li>
								<button class:hot={hovered === p.id} onmouseenter={() => (hovered = p.id)}>
									{@render icon(p.id)}<span>{p.label}</span>
								</button>
							</li>
						{/each}
					</ul>
				</div>
				<div class="side__foot"><i class="tri tri--left"></i></div>
				<span class="grip grip--h grip--second"></span>
				{#each plotting as t}
					{@render tool(t)}
				{/each}
				<div class="side__foot side__foot--end">
					<i class="tri tri--left"></i>
					<svg width="8" height="10" viewBox="0 0 8 10"><path d="M1 1l3 3 3-3M1 5l3 3 3-3" fill="none" stroke="#000" stroke-width="1.500" /></svg>
				</div>
			</aside>

			<section class="view" aria-label="Graphics window">
				<svg class="scene">
					<defs>
						<linearGradient id="rim" x1="0" y1="0" x2=".2" y2="1">
							<stop offset="0" stop-color="#5c5cf0" />
							<stop offset=".5" stop-color="#5a5ae4" />
							<stop offset="1" stop-color="#5a5ac4" />
						</linearGradient>
						<linearGradient id="cap">
							<stop offset="0" stop-color="#5c5cd6" />
							<stop offset=".5" stop-color="#5c5cb4" />
							<stop offset="1" stop-color="#5c5cd0" />
						</linearGradient>
						<linearGradient id="wall">
							<stop offset="0" stop-color="#1c1cc0" />
							<stop offset=".5" stop-color="#2a2ae0" />
							<stop offset="1" stop-color="#1c1cb8" />
						</linearGradient>
						<linearGradient id="pin">
							<stop offset="0" stop-color="#c80000" />
							<stop offset=".35" stop-color="#6c0000" />
							<stop offset=".6" stop-color="#a00000" />
							<stop offset="1" stop-color="#ff0000" />
						</linearGradient>
					</defs>
					<g transform="translate(-54 -148)">
						<ellipse cx="330.500" cy="465" rx="255" ry="162" fill="url(#rim)" stroke="#2c2c50" />
						<ellipse cx="331" cy="465" rx="253" ry="133" fill="#5c5cff" />
						{#each holes as [x, y]}
							<g>
								<path d="M{x - 17} {y}v22a17 10 0 0 0 34 0v-22z" fill="url(#wall)" stroke="#2020a0" />
								<ellipse cx={x} cy={y + 22} rx="17" ry="10" fill="#2020f0" stroke="#1818a0" />
								<ellipse cx={x} cy={y} rx="17" ry="10" fill="url(#cap)" stroke="#333344" />
							</g>
						{/each}
						<ellipse cx="331" cy="465" rx="253" ry="133" fill="none" stroke="#24246c" />
						<text class="plotter plotter--faint" x="149" y="376">Mill</text>
						<path d="M330.500 451V397" stroke="#0000f0" />
						<path d="M331 451l46-27" stroke="#00ff10" />
						<path d="M331 451l46 27" stroke="#ff0010" />
						<path d="M319 445h11v6h-10M322 447l14 7M326 452l8-6M334 449h5v6h-8z" fill="none" stroke="#d09a30" stroke-width="2" />
						<g fill="#ff8420" class="plotter plotter--axis">
							<text x="330" y="376">ZC</text>
							<text x="396" y="414">YC</text>
							<text x="396" y="490">XC</text>
						</g>
						<text class="plotter" x="350" y="451" fill="#d8a038">J_Mill</text>
						<path d="M467 456v69a16 9 0 0 0 33 0v-69z" fill="url(#pin)" stroke="#600000" />
						<ellipse cx="483.500" cy="456" rx="16.500" ry="9" fill="#f00" stroke="#400" />
						<path d="M480 443v14M480 444h6v6h-6M483 447v11M487 449v10" stroke="#d09a30" stroke-width="2" fill="none" />
						<path d="M477 457h13" stroke="#fff" />
						<text class="plotter plotter--axis" x="497" y="463" fill="#1f9a28">Die</text>
						<text class="plotter" x="504" y="457" fill="#d8a038">J_Die</text>
						<text class="url" x="225" y="498">http://mechanical-design-handbook.blogspot.com</text>
						<text class="mode" x="57" y="810">TFR-TRI WORK</text>
					</g>
				</svg>
			</section>

			<aside class="dock">
				<div class="dock__head">
					<h2>Motion Navigator</h2>
					<svg width="12" height="12" viewBox="0 0 12 12"><path d="M4 2l4-1 3 3-1 4-4 2-3-3z" fill="#d8d488" stroke="#000" stroke-width="1.600" /><path d="M6 2l4 5M1 11l3-3" stroke="#000" stroke-width="1.600" /></svg>
				</div>
				<div class="cols"><span class="cols__name">Name</span><span class="cols__status">S</span></div>
				<ul class="tree">
					{#each tree as node}
						<li class="node node--{node.level}" class:node--rail={node.rail}>
							{#if node.open}
								<button class="node__toggle" aria-label="Collapse {node.label}"></button>
							{/if}
							{#if node.level > 0}
								<span class="node__dots"></span>
							{/if}
							<label>
								{#if node.checked !== undefined}
									<input type="checkbox" bind:checked={node.checked} />
								{/if}
								{@render icon(node.icon, 16)}
								<span>{node.label}</span>
							</label>
						</li>
					{/each}
				</ul>
				<div class="scroll">
					<button aria-label="Scroll left"><svg viewBox="0 0 16 16"><path d="M10 4L6 8l4 4" /></svg></button>
					<span class="scroll__thumb"></span>
					<button class="scroll__right" aria-label="Scroll right"><svg viewBox="0 0 16 16"><path d="M6 4l4 4-4 4" /></svg></button>
				</div>
				<div class="splitter"><span></span></div>
				<div class="preview"><button>Preview</button></div>
			</aside>

			<nav class="tabs" aria-label="Resource bar">
				{#each tabs as group, g}
					<div class="tabs__group" class:tabs__group--first={g === 0}>
						{#each group as t}
							<button class:current={t === 'tabMotion'} aria-label={t}>{@render icon(t)}</button>
						{/each}
					</div>
				{/each}
			</nav>

			<svg class="callout" width="310" height="560" aria-hidden="true">
				<g transform="translate(-6 -147)">
					<path d="M269 667L166 655" stroke="#f00" stroke-width="2" />
					<path d="M175 650l-11 5 11 6" fill="none" stroke="#f00" stroke-width="2" />
					<circle cx="287.500" cy="666.500" r="18" fill="#fff" stroke="#f00" stroke-width="2" />
					<text x="287" y="672" text-anchor="middle">11</text>
				</g>
			</svg>
			<div class="tooltip" role="tooltip">Spreadsheet Run</div>
			<svg class="cursor" width="14" height="22" viewBox="0 0 14 22" aria-hidden="true">
				<path d="M1 1v16l4-4 3 7 3-1-3-7h5z" fill="#fff" stroke="#000" />
			</svg>
		</main>

		<footer class="bar bar--bottom">
			<div class="group">
				<span class="grip"></span>
				{@render tools(assembly)}
			</div>
		</footer>
	</div>
</div>

<style>
	:global(body) {
		margin: 0;
		background: #dcdce8;
	}

	.window {
		--line: #64648a;
		--tan: #d6ceb4;
		box-sizing: border-box;
		display: flex;
		flex-direction: column;
		min-height: calc(100vh - 4px);
		margin: 2px;
		padding: 0 2px 2px;
		border: 1px solid var(--line);
		border-radius: 7px 7px 0 0;
		background: #d4d4e2;
		font: 11px/14px "DejaVu Sans Condensed", "DejaVu Sans", sans-serif;
		color: #000;
	}
	button, select, input { font: inherit; color: inherit; margin: 0; }
	button { padding: 0; border: 0; background: none; }
	h1, h2, ul { margin: 0; padding: 0; list-style: none; }
	.icon { display: block; flex: none; overflow: visible; }

	/* title bar */
	.title {
		display: flex;
		align-items: center;
		gap: 2px;
		height: 26px;
		margin: 0 -2px;
		padding: 0 4px;
		border-radius: 6px 6px 0 0;
		background: linear-gradient(#f2f2f8 0, #a3a3c0 3px, #b4b4cc 8px, #f4f4f8 17px, #ffffff 22px, #c4c4d4 26px);
	}
	.title h1 {
		flex: 1;
		margin-left: 1px;
		font: 600 13px/20px "Open Sans", "Noto Sans", sans-serif;
		white-space: nowrap;
		overflow: hidden;
		color: #111;
	}
	.caption {
		box-sizing: border-box;
		width: 21px;
		height: 21px;
		border: 1px solid #6c6c90;
		border-radius: 3px;
		background: linear-gradient(135deg, #ffffff, #a8a8c8 60%, #c4c4dc);
	}
	.caption svg { display: block; fill: none; stroke: #2b2b50; }
	.caption--close { background: linear-gradient(135deg, #f0a8a0, #d04848 60%, #c04040); border-color: #a03c3c; }
	.caption--close svg { stroke: #fff; }

	.client {
		display: flex;
		flex: 1;
		flex-direction: column;
		border: 1px solid var(--line);
		background: linear-gradient(90deg, #f3f3ee, #e8e8ea 45%, #dfe1ea);
	}

	/* menu bar */
	.menubar {
		display: flex;
		align-items: center;
		height: 24px;
		padding: 0 4px;
		border-bottom: 1px solid var(--tan);
	}
	.menu { padding: 0 6px; line-height: 20px; white-space: nowrap; }
	.menu u { text-underline-offset: 2px; }
	.mdi { display: flex; gap: 2px; margin-left: auto; }
	.mdi button { width: 16px; height: 14px; background: linear-gradient(#fff, #dcdcdc); border: 0; }
	.mdi svg { display: block; fill: none; stroke: #555; }
	.mdi button:disabled svg { stroke: #c8c8bc; }

	/* toolbars */
	.bar { display: flex; height: 34px; }
	.group {
		box-sizing: border-box;
		display: flex;
		align-items: center;
		padding-right: 3px;
		border: solid var(--tan);
		border-width: 0 1px 1px 0;
	}
	.grip {
		flex: none;
		width: 3px;
		height: 22px;
		margin-left: 3px;
		background: radial-gradient(circle at 1px 1px, #8f8f86 1px, transparent 1px) 0 0 / 3px 4px;
	}
	.grip--h {
		width: 34px;
		height: 3px;
		margin: 2px auto 1px;
		background-size: 4px 3px;
	}
	.slot { display: flex; align-items: center; justify-content: center; flex: none; }
	.tool {
		box-sizing: border-box;
		display: grid;
		place-items: center;
		width: 31px;
		height: 31px;
		border: 1px solid transparent;
		border-radius: 3px;
	}
	.tool--active { background: #ffc98e; border-color: #66645c; }
	.sep { flex: none; width: 1px; height: 26px; margin: 0 3px 0 2px; background: #b4b4b8; }
	.drop { display: grid; place-items: center; width: 11px; height: 24px; }
	.drop::before, .tri {
		content: '';
		border: solid transparent;
		border-width: 3px 3px 0;
		border-top-color: #000;
	}
	.drop--more { align-self: end; height: 12px; }
	.tri--left { border-width: 3px 3px 3px 0; border-color: transparent #000 transparent transparent; }
	.start { display: flex; align-items: center; gap: 4px; margin-right: 2px; padding-left: 4px; }

	.combo { position: relative; display: block; flex: none; margin: 0 4px 0 3px; }
	.combo--layer { width: 44px; }
	.combo--any { width: 87px; }
	.combo--scope { width: 104px; }
	.combo select {
		box-sizing: border-box;
		display: block;
		width: 100%;
		height: 19px;
		padding: 0 3px;
		appearance: none;
		border: 1px solid #8c8ca8;
		border-radius: 0;
		background: #fff;
	}
	.combo__arrow {
		position: absolute;
		top: 1px;
		right: 1px;
		width: 16px;
		height: 17px;
		border-left: 1px solid #a0a0bc;
		background: linear-gradient(#f4f4fa, #c4c4d8);
		fill: none;
		stroke: #333;
		stroke-width: 2;
		pointer-events: none;
	}

	.prompt {
		display: flex;
		height: 20px;
		padding: 1px 0;
		border-top: 1px solid #92929a;
		border-bottom: 1px solid #92929a;
		background: linear-gradient(#c6c6ce, #dddde4 5px, #dcdce3);
	}
	.prompt span { border-right: 1px solid #b9b5a4; box-shadow: 1px 0 #fff; }
	.prompt__cue { width: 46.5%; }
	.prompt__status { flex: 1; }
	.prompt__box { width: 19px; }
	.prompt__end { width: 35px; }

	/* main area */
	.workspace { position: relative; display: flex; flex: 1; background: #dfdfe4; }
	.side {
		display: flex;
		flex: none;
		flex-direction: column;
		width: 45px;
		background: linear-gradient(90deg, #f5f5f0, #dcdeea);
	}
	.side .sep { width: 39px; height: 1px; margin: 2px auto 3px; }
	.side .tool { width: 30px; }
	.side .drop { width: 10px; }
	.fx { font: italic bold 14px/20px "Liberation Serif", serif; color: #231060; }
	.slot--open { position: relative; }
	.slot--open > .tool { border-color: #b4b0a0; background: #f4f4f2; }
	.slot--open > .drop { height: 31px; border: 1px solid #b4b0a0; box-sizing: border-box; background: #dcdcd8; }
	.side__foot { display: flex; align-items: center; justify-content: space-between; height: 12px; padding: 0 4px; }
	.side__foot--end { margin-top: auto; margin-bottom: 2px; }
	.grip--second { margin-top: 5px; margin-bottom: 2px; }

	.popup {
		position: absolute;
		z-index: 2;
		top: 0;
		left: 43px;
		box-sizing: border-box;
		width: 124px;
		padding: 2px;
		border: 1px solid #8c8c94;
		background: #fff;
	}
	.popup button {
		box-sizing: border-box;
		display: flex;
		align-items: center;
		gap: 3px;
		width: 100%;
		height: 30px;
		padding: 0 2px;
		border: 1px solid transparent;
		border-radius: 2px;
		white-space: nowrap;
	}
	.popup .hot { border-color: #c4c0b0; background: linear-gradient(#f8f8f6, #e6e6e0); }

	.view {
		flex: 1;
		min-width: 0;
		border: 1px solid #f08a1c;
		border-right-color: #fff;
		box-shadow: -2px 0 #85858c;
		margin-left: 2px;
		background: #fff;
		display: flex;
	}
	.scene { flex: 1; width: 100%; min-height: 664px; }
	.plotter { font: 24px "Liberation Mono", monospace; stroke: #5c5cff; stroke-width: .6px; }
	.plotter--axis { font-size: 20px; }
	.plotter--faint { fill: #1c7a80; opacity: .5; }
	.url { font: 16px "Liberation Sans", sans-serif; fill: #f01020; }
	.mode { font: 14px "Liberation Sans", sans-serif; fill: #f5820a; stroke: #f5820a; stroke-width: .3px; }

	.callout { position: absolute; z-index: 3; top: 0; left: 0; pointer-events: none; }
	.callout text { font: 17px "Liberation Sans", sans-serif; fill: #f01010; }
	.tooltip {
		position: absolute;
		z-index: 4;
		top: 537px;
		left: 137px;
		padding: 1px 2px;
		border: 1px solid #000;
		background: #ffffe1;
		line-height: 14px;
	}
	.cursor { position: absolute; z-index: 5; top: 516px; left: 137px; }

	/* navigator */
	.dock {
		display: flex;
		flex: none;
		flex-direction: column;
		width: 215px;
		margin-left: 2px;
		padding: 0 8px 4px 6px;
		border-left: 2px solid #a2a2a8;
		background: #dfdee3;
	}
	.dock__head { display: flex; align-items: center; justify-content: space-between; height: 24px; padding: 0 7px 0 1px; }
	.dock__head h2 { font-size: 11px; line-height: 14px; }
	.cols {
		display: flex;
		height: 19px;
		border-bottom: 1px solid #8d8d86;
		background: #dfdee3;
		font-size: 13px;
		line-height: 20px;
		overflow: hidden;
	}
	.cols span { box-shadow: inset 1px 1px #fff; padding-left: 6px; }
	.cols__name { flex: 1; border-right: 2px solid #8d8d86; }
	.cols__status { width: 4px; }
	.tree { flex: 1; background: #fff; font-size: 13px; line-height: 18px; }
	.node {
		--rail: repeating-linear-gradient(#888 0 1px, transparent 1px 2px);
		display: flex;
		align-items: center;
		height: 18px;
	}
	.node label { display: flex; align-items: center; gap: 2px; white-space: nowrap; }
	.node--1 { padding-left: 5px; }
	.node--2 { padding-left: 24px; }
	.node--3 { padding-left: 47px; background: var(--rail) 47px 0 / 1px 18px no-repeat; }
	.node--2.node--rail { background: var(--rail) 28px 0 / 1px 18px no-repeat; }
	.node--3.node--rail { background: var(--rail) 28px 0 / 1px 18px no-repeat, var(--rail) 47px 0 / 1px 18px no-repeat; }
	.node--3:last-child { background-size: 1px 10px; }
	.node__toggle {
		box-sizing: border-box;
		display: grid;
		place-items: center;
		width: 9px;
		height: 9px;
		border: 1px solid #8c8c8c;
		background: #fff;
	}
	.node__toggle::before { content: ''; width: 5px; height: 1px; background: #000; }
	.node__dots { width: 4px; margin-right: 3px; border-top: 1px dotted #888; }
	.node--3 .node__dots { width: 10px; }
	.node input {
		display: grid;
		width: 12px;
		height: 12px;
		box-sizing: border-box;
		appearance: none;
		border: 1px solid #222;
		background: #fff;
	}
	.node input:checked::before {
		content: '';
		width: 12px;
		height: 11px;
		margin-top: -2px;
		background: #d81414;
		clip-path: polygon(4% 38%, 30% 60%, 90% 0, 100% 8%, 36% 100%, 4% 66%);
	}

	.scroll { display: flex; height: 16px; background: linear-gradient(#e4e4ee, #fff); }
	.scroll button, .scroll__thumb {
		box-sizing: border-box;
		width: 17px;
		height: 16px;
		border: 1px solid #8c8ca0;
		border-radius: 2px;
		background: linear-gradient(#fafafc, #c6c6d8);
	}
	.scroll svg { display: block; width: 15px; height: 14px; fill: none; stroke: #333; stroke-width: 2.4; }
	.scroll .scroll__thumb {
		display: grid;
		place-items: center;
		width: 54px;
		margin-left: 1px;
	}
	.scroll__thumb::before { content: ''; width: 8px; height: 7px; background: repeating-linear-gradient(90deg, #8c8ca0 0 1px, #eee 1px 2px); }
	.scroll__right { margin-left: auto; }
	.splitter {
		display: grid;
		place-items: center;
		height: 9px;
		background: linear-gradient(transparent 3px, #909094 3px 4px, #fff 4px 6px, #909094 6px 7px, transparent 7px);
	}
	.splitter span { box-sizing: border-box; width: 60px; height: 8px; border: 1px solid #909094; border-radius: 2px; background: #fff; }
	.preview { padding: 4px 6px; background: linear-gradient(#dcdce0, #a6a4bc); }
	.preview button {
		width: 100%;
		height: 24px;
		padding-left: 7px;
		border-radius: 4px 4px 0 0;
		background: linear-gradient(90deg, #fff 50%, #e8e8fa 70%, #cac8e0);
		font-weight: bold;
		text-align: left;
		color: #2c3450;
	}

	.tabs { flex: none; width: 32px; border-left: 1px solid #77777c; background: #9c9b9f; }
	.tabs__group { width: 28px; margin-bottom: 13px; background: linear-gradient(90deg, #f4f4ee, #dcdeea); }
	.tabs__group--first { margin-top: 12px; }
	.tabs button { display: grid; place-items: center; width: 27px; height: 42px; }
	.tabs .current { width: 30px; height: 46px; padding-right: 3px; border-bottom: 1px solid #88888c; background: #dfdee3; box-sizing: border-box; }
	.tabs__group--first button:not(.current) { height: 40px; }

	.bar--bottom { border-top: 1px solid #fff; }
</style>
